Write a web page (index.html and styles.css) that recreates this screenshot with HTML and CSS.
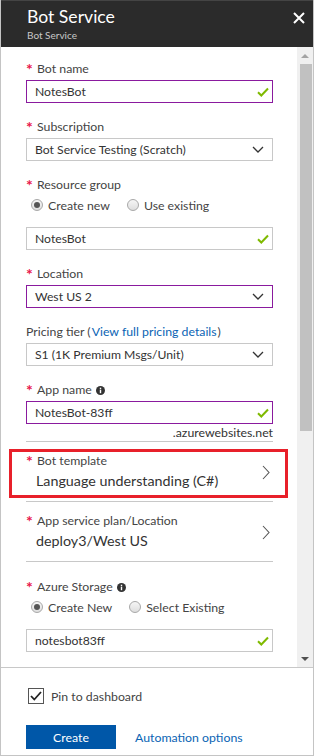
FILE: index.html
```html
<!DOCTYPE html>
<html>
<head>
<meta charset="utf-8">
<link rel="stylesheet" href="styles.css">
</head>
<body>
<div class="blade">
  <header class="hdr">
    <div class="hdr-text">
      <div class="title">Bot Service</div>
      <div class="subtitle">Bot Service</div>
    </div>
    <svg class="close" width="12" height="12" viewBox="0 0 12 12"><path d="M1 1L11 11M11 1L1 11" stroke="#fff" stroke-width="2" fill="none"/></svg>
  </header>
  <div class="main">
    <div class="content">
      <div class="field first">
        <div class="label"><span class="req">*</span>Bot name</div>
        <div class="input focus"><span class="val">NotesBot</span><svg class="check" width="12" height="10" viewBox="0 0 12 10"><path d="M1 5.2L4.3 8.5L11 1.5" stroke="#7fba00" stroke-width="2" fill="none"/></svg></div>
      </div>
      <div class="field">
        <div class="label"><span class="req">*</span>Subscription</div>
        <div class="input"><span class="val">Bot Service Testing (Scratch)</span><svg class="chev" width="12" height="7" viewBox="0 0 12 7"><path d="M1 1L6 6L11 1" stroke="#333" stroke-width="1.3" fill="none"/></svg></div>
      </div>
      <div class="field">
        <div class="label"><span class="req">*</span>Resource group</div>
        <div class="radios">
          <span class="opt"><span class="radio on"></span>Create new</span>
          <span class="opt"><span class="radio"></span>Use existing</span>
        </div>
        <div class="input"><span class="val">NotesBot</span><svg class="check" width="12" height="10" viewBox="0 0 12 10"><path d="M1 5.2L4.3 8.5L11 1.5" stroke="#7fba00" stroke-width="2" fill="none"/></svg></div>
      </div>
      <div class="field">
        <div class="label"><span class="req">*</span>Location</div>
        <div class="input focus"><span class="val">West US 2</span><svg class="chev" width="12" height="7" viewBox="0 0 12 7"><path d="M1 1L6 6L11 1" stroke="#333" stroke-width="1.3" fill="none"/></svg></div>
      </div>
      <div class="field">
        <div class="label">Pricing tier (<span class="link">View full pricing details</span>)</div>
        <div class="input"><span class="val">S1 (1K Premium Msgs/Unit)</span><svg class="chev" width="12" height="7" viewBox="0 0 12 7"><path d="M1 1L6 6L11 1" stroke="#333" stroke-width="1.3" fill="none"/></svg></div>
      </div>
      <div class="field">
        <div class="label"><span class="req">*</span>App name<svg class="info" width="9" height="9" viewBox="0 0 9 9"><circle cx="4.5" cy="4.5" r="4.5" fill="#333"/><rect x="3.8" y="3.6" width="1.4" height="3.6" fill="#fff"/><rect x="3.8" y="1.7" width="1.4" height="1.3" fill="#fff"/></svg></div>
        <div class="input focus"><span class="val">NotesBot-83ff</span><svg class="check" width="12" height="10" viewBox="0 0 12 10"><path d="M1 5.2L4.3 8.5L11 1.5" stroke="#7fba00" stroke-width="2" fill="none"/></svg></div>
        <div class="suffix">.azurewebsites.net</div>
      </div>
      <div class="section highlight">
        <div class="sec-text">
          <div class="label"><span class="req">*</span>Bot template</div>
          <div class="sec-val">Language understanding (C#)</div>
        </div>
        <svg class="chev-r" width="8" height="15" viewBox="0 0 8 15"><path d="M1 1L7 7.5L1 14" stroke="#555" stroke-width="1.1" fill="none"/></svg>
      </div>
      <div class="section">
        <div class="sec-text">
          <div class="label"><span class="req">*</span>App service plan/Location</div>
          <div class="sec-val">deploy3/West US</div>
        </div>
        <svg class="chev-r" width="8" height="15" viewBox="0 0 8 15"><path d="M1 1L7 7.5L1 14" stroke="#555" stroke-width="1.1" fill="none"/></svg>
      </div>
      <div class="field storage">
        <div class="label"><span class="req">*</span>Azure Storage<svg class="info" width="9" height="9" viewBox="0 0 9 9"><circle cx="4.5" cy="4.5" r="4.5" fill="#333"/><rect x="3.8" y="3.6" width="1.4" height="3.6" fill="#fff"/><rect x="3.8" y="1.7" width="1.4" height="1.3" fill="#fff"/></svg></div>
        <div class="radios">
          <span class="opt"><span class="radio on"></span>Create New</span>
          <span class="opt"><span class="radio"></span>Select Existing</span>
        </div>
        <div class="input"><span class="val">notesbot83ff</span><svg class="check" width="12" height="10" viewBox="0 0 12 10"><path d="M1 5.2L4.3 8.5L11 1.5" stroke="#7fba00" stroke-width="2" fill="none"/></svg></div>
      </div>
    </div>
    <div class="scrollbar">
      <div class="arrow up"></div>
      <div class="thumb"></div>
      <div class="track-rest"></div>
      <div class="arrow down"></div>
    </div>
  </div>
  <footer class="footer">
    <div class="pin"><span class="checkbox"><svg width="12" height="10" viewBox="0 0 12 10"><path d="M1 5L4.3 8.5L11 1" stroke="#222" stroke-width="1.8" fill="none"/></svg></span>Pin to dashboard</div>
    <div class="actions">
      <button class="btn">Create</button>
      <span class="link auto">Automation options</span>
    </div>
  </footer>
</div>
</body>
</html>
```
FILE: styles.css
```css
* { box-sizing: border-box; }
body {
  margin: 0;
  font-family: Lato, "Open Sans", sans-serif;
  color: #333;
  background: #fff;
}
.blade {
  width: 314px;
  height: 756px;
  border: 1px solid #c4c4c4;
  border-top: none;
  display: flex;
  flex-direction: column;
  overflow: hidden;
}
.hdr {
  flex: none;
  height: 47px;
  background: #2b2b2b;
  border-top: 1px solid #444;
  display: flex;
  justify-content: space-between;
  align-items: flex-start;
  padding: 0 8px 0 26px;
  color: #fff;
}
.title {
  font-size: 17.6px;
  line-height: 20px;
  padding-top: 6px;
}
.subtitle {
  font-size: 10px;
  line-height: 12px;
  margin-top: 2px;
  color: #c8c8c8;
}
.close { margin-top: 11px; }
.main {
  flex: none;
  height: 620px;
  display: flex;
}
.content {
  flex: 1;
  overflow: hidden;
  padding: 14px 24px 0 25px;
}
.field { margin-top: 16px; }
.field.first { margin-top: 0; }
.field.storage { margin-top: 17px; }
.label {
  font-size: 12.3px;
  line-height: 16px;
  color: #444;
  display: flex;
  align-items: center;
  white-space: nowrap;
}
.req {
  color: #e8154a;
  width: 11px;
  flex: none;
  font-size: 16px;
  font-weight: bold;
  line-height: 16px;
  height: 16px;
  position: relative;
  top: 0;
}
.link { color: #0a64b4; }
.label .link { margin: 0 1px; }
.info { margin-left: 4px; }
.input {
  margin-top: 3px;
  height: 23px;
  border: 1px solid #c8c8c8;
  display: flex;
  align-items: center;
  justify-content: space-between;
  padding: 0 3px 0 8px;
  font-size: 12.2px;
  color: #333;
}
.input.focus { border-color: #8a1a9e; }
.input .chev { margin-right: 5px; }
.radios {
  margin-top: 2px;
  height: 20px;
  display: flex;
  align-items: center;
  padding-left: 5px;
  font-size: 12.3px;
  color: #444;
}
.radios + .input { margin-top: 12px; }
.opt {
  display: flex;
  align-items: center;
  margin-right: 17px;
}
.radio {
  width: 12px;
  height: 12px;
  border-radius: 50%;
  border: 1px solid #a8a8a8;
  background: linear-gradient(#f6f6f6, #dedede);
  margin-right: 5px;
  display: flex;
  align-items: center;
  justify-content: center;
}
.radio.on::after {
  content: "";
  width: 6px;
  height: 6px;
  border-radius: 50%;
  background: #555;
}
.suffix {
  text-align: right;
  font-size: 12.3px;
  line-height: 17px;
  color: #333;
  border-bottom: 1px solid #c8c8c8;
}
.section {
  position: relative;
  display: flex;
  align-items: center;
  justify-content: space-between;
  padding: 11px 3px 10px 0;
  border-bottom: 1px solid #c8c8c8;
}
.sec-val {
  margin-top: 2px;
  font-size: 14.3px;
  line-height: 20px;
  color: #333;
  padding-left: 10px;
}
.highlight::after {
  content: "";
  position: absolute;
  left: -17px;
  right: -15px;
  top: 7px;
  bottom: 3px;
  border: 3px solid #e8202a;
}
.scrollbar {
  flex: none;
  width: 16px;
  background: #f0f0f0;
  display: flex;
  flex-direction: column;
  align-items: center;
}
.arrow {
  flex: none;
  height: 17px;
  width: 100%;
  display: flex;
  align-items: center;
  justify-content: center;
}
.arrow.up::before {
  content: "";
  border-left: 4px solid transparent;
  border-right: 4px solid transparent;
  border-bottom: 4px solid #a3a3a3;
}
.arrow.down::before {
  content: "";
  border-left: 4px solid transparent;
  border-right: 4px solid transparent;
  border-top: 4px solid #505050;
}
.thumb {
  flex: none;
  width: 12px;
  height: 367px;
  margin-left: 2px;
  background: #c1c1c1;
}
.track-rest { flex: 1; }
.footer {
  flex: 1;
  border-top: 1px solid #c8c8c8;
  padding: 20px 0 0 25px;
}
.pin {
  display: flex;
  align-items: center;
  font-size: 12.3px;
  color: #444;
  height: 16px;
  padding-left: 2px;
}
.checkbox {
  width: 16px;
  height: 16px;
  border: 1px solid #555;
  margin-right: 7px;
  display: flex;
  align-items: center;
  justify-content: center;
}
.actions {
  margin-top: 21px;
  display: flex;
  align-items: center;
}
.btn {
  width: 90px;
  height: 24px;
  border: none;
  background: #0057a8;
  color: #fff;
  font-family: inherit;
  font-size: 12.3px;
  padding: 0;
  margin-right: 19px;
}
.auto { font-size: 12.3px; }
```
